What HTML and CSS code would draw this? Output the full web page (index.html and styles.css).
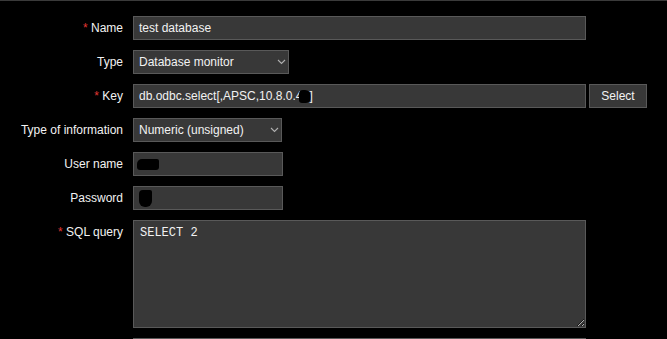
FILE: index.html
```html
<!DOCTYPE html>
<html lang="en">

<head>
    <meta charset="UTF-8">
    <meta name="viewport" content="width=device-width, initial-scale=1.0">
    <title>Item</title>
    <link rel="stylesheet" href="styles.css">
</head>

<body>
    <div class="form-grid">
        <!-- Name -->
        <label class="form-label"><span class="req">*</span> Name</label>
        <div class="form-field">
            <div class="input w-wide">test database</div>
        </div>

        <!-- Type -->
        <label class="form-label">Type</label>
        <div class="form-field">
            <div class="input select w-type">
                <span>Database monitor</span>
                <svg class="chevron" width="9" height="6" viewBox="0 0 9 6"><path d="M1 1 L4.5 4.5 L8 1" fill="none" stroke="#b0b0b0" stroke-width="1.1"/></svg>
            </div>
        </div>

        <!-- Key -->
        <label class="form-label"><span class="req">*</span> Key</label>
        <div class="form-field">
            <div class="input w-wide">db.odbc.select[,APSC,10.8.0.4<span class="blob blob-key"></span>]</div>
            <button class="btn">Select</button>
        </div>

        <!-- Type of information -->
        <label class="form-label">Type of information</label>
        <div class="form-field">
            <div class="input select w-info">
                <span>Numeric (unsigned)</span>
                <svg class="chevron" width="9" height="6" viewBox="0 0 9 6"><path d="M1 1 L4.5 4.5 L8 1" fill="none" stroke="#b0b0b0" stroke-width="1.1"/></svg>
            </div>
        </div>

        <!-- User name -->
        <label class="form-label">User name</label>
        <div class="form-field">
            <div class="input masked w-small"><span class="blob blob-user"></span></div>
        </div>

        <!-- Password -->
        <label class="form-label">Password</label>
        <div class="form-field">
            <div class="input masked w-small"><span class="blob blob-pass"></span></div>
        </div>

        <!-- SQL query -->
        <label class="form-label"><span class="req">*</span> SQL query</label>
        <div class="form-field">
            <textarea class="textarea w-wide">SELECT 2</textarea>
        </div>

        <!-- next row (cut off) -->
        <label class="form-label"></label>
        <div class="form-field">
            <div class="input w-wide"></div>
        </div>
    </div>
</body>

</html>
```

FILE: styles.css
```css
* {
    box-sizing: border-box;
}

html,
body {
    margin: 0;
    background-color: #000;
    color-scheme: dark;
}

body {
    border-top: 1px solid #3a3a3a;
    padding-top: 15px;
    font-family: "Liberation Sans", Arial, sans-serif;
    font-size: 12px;
    color: #f2f2f2;
}

.form-grid {
    display: grid;
    grid-template-columns: 123px auto;
    column-gap: 10px;
    row-gap: 10px;
}

.form-label {
    text-align: right;
    line-height: 24px;
    white-space: nowrap;
}

.req {
    color: #e33734;
}

.form-field {
    display: flex;
    gap: 3px;
}

.input {
    height: 24px;
    line-height: 22px;
    padding: 0 5px;
    background-color: #383838;
    border: 1px solid #595959;
    color: #f2f2f2;
    white-space: nowrap;
}

.select {
    display: flex;
    justify-content: space-between;
    align-items: center;
}

.select .chevron {
    margin-right: -3px;
}

.masked {
    display: flex;
    align-items: flex-start;
}

.w-wide {
    width: 453px;
}

.w-type {
    width: 156px;
}

.w-info {
    width: 149px;
}

.w-small {
    width: 150px;
}

.btn {
    width: 58px;
    height: 24px;
    padding: 0;
    background-color: #383838;
    border: 1px solid #595959;
    color: #f2f2f2;
    font-family: "Liberation Sans", Arial, sans-serif;
    font-size: 12px;
}

.textarea {
    height: 108px;
    padding: 5px 6px;
    background-color: #383838;
    border: 1px solid #595959;
    color: #f2f2f2;
    font-family: "Liberation Mono", "Courier New", monospace;
    font-size: 12px;
    outline: none;
    resize: both;
}

/* redacted bits */
.blob {
    display: inline-block;
    background-color: #000;
}

.blob-key {
    width: 12px;
    height: 13px;
    border-radius: 4px 6px 5px 3px;
    margin: 0 -2px 0 -3px;
    vertical-align: -3px;
}

.blob-user {
    width: 22px;
    height: 11px;
    border-radius: 5px 2px 3px 3px;
    margin: 6px 0 0 -2px;
}

.blob-pass {
    width: 13px;
    height: 17px;
    border-radius: 4px 2px 6px 6px;
    margin-top: 3px;
}
```
